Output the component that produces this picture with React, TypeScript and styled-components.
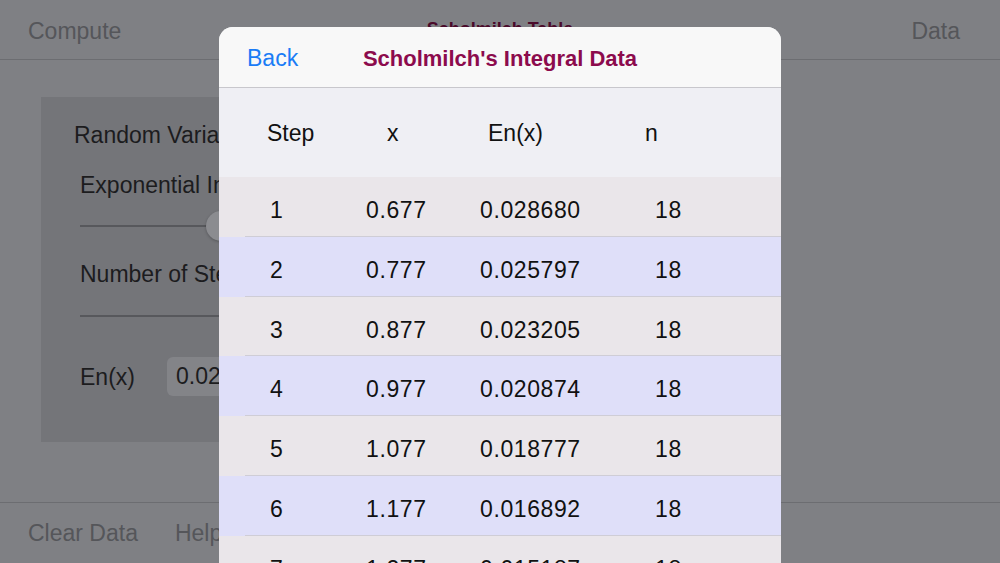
import React from 'react';
import styled, { createGlobalStyle } from 'styled-components';

const rows = [
  { step: 1, x: '0.677', en: '0.028680', n: 18 },
  { step: 2, x: '0.777', en: '0.025797', n: 18 },
  { step: 3, x: '0.877', en: '0.023205', n: 18 },
  { step: 4, x: '0.977', en: '0.020874', n: 18 },
  { step: 5, x: '1.077', en: '0.018777', n: 18 },
  { step: 6, x: '1.177', en: '0.016892', n: 18 },
  { step: 7, x: '1.277', en: '0.015187', n: 18 },
  { step: 8, x: '1.377', en: '0.013659', n: 18 },
];

const GlobalStyle = createGlobalStyle`
  html, body {
    margin: 0;
    padding: 0;
    overflow: hidden;
  }
  body {
    font-family: "Liberation Sans", Arial, sans-serif;
  }
`;

export default function App() {
  return (
    <>
      <GlobalStyle />
      <Screen>
        <NavBar>
          <NavItem>Compute</NavItem>
          <NavTitle>Scholmilch Table</NavTitle>
          <NavItem>Data</NavItem>
        </NavBar>

        <Content>
          <Panel>
            <PanelHeading>Random Variable x</PanelHeading>
            <Field>
              <FieldLabel $gap={22}>Exponential Integral Parameter</FieldLabel>
              <Slider $gap={12}>
                <Track />
                <Thumb />
              </Slider>
              <FieldLabel $gap={19}>Number of Steps</FieldLabel>
              <Slider $gap={13}>
                <Track />
              </Slider>
              <ResultRow>
                <FieldLabel $gap={0}>En(x)</FieldLabel>
                <ResultBox>0.028680</ResultBox>
              </ResultRow>
            </Field>
          </Panel>
        </Content>

        <Toolbar>
          <NavItem>Clear Data</NavItem>
          <NavItem>Help</NavItem>
        </Toolbar>

        <Modal>
          <ModalHeader>
            <BackButton>Back</BackButton>
            <ModalTitle>Scholmilch's Integral Data</ModalTitle>
          </ModalHeader>
          <ColumnHeader>
            <Cell $left={48}>Step</Cell>
            <Cell $left={168}>x</Cell>
            <Cell $left={269}>En(x)</Cell>
            <Cell $left={426}>n</Cell>
          </ColumnHeader>
          {rows.map((r) => (
            <DataRow key={r.step} $even={r.step % 2 === 0}>
              <Cell $left={51}>{r.step}</Cell>
              <Cell $left={147}>{r.x}</Cell>
              <Cell $left={261}>{r.en}</Cell>
              <Cell $left={436}>{r.n}</Cell>
            </DataRow>
          ))}
        </Modal>
      </Screen>
    </>
  );
}

const Screen = styled.div`
  position: relative;
  width: 100vw;
  height: 100vh;
  display: flex;
  flex-direction: column;
  background: #7f8084;
  overflow: hidden;
`;

const NavBar = styled.header`
  height: 60px;
  flex-shrink: 0;
  display: flex;
  align-items: center;
  justify-content: space-between;
  padding: 4px 40px 0 28px;
  border-bottom: 1px solid #6c6d71;
  box-sizing: border-box;
`;

const NavItem = styled.span`
  font-size: 23px;
  color: #55565a;
`;

const NavTitle = styled.span`
  position: absolute;
  left: 0;
  right: 0;
  top: 19px;
  text-align: center;
  font-size: 18px;
  font-weight: bold;
  color: #4a0a2a;
  pointer-events: none;
`;

const Content = styled.main`
  flex: 1;
  padding: 37px 0 0 41px;
`;

const Panel = styled.section`
  width: 440px;
  height: 345px;
  box-sizing: border-box;
  padding: 24px 0 0 33px;
  background: #747579;
`;

const PanelHeading = styled.div`
  font-size: 23px;
  line-height: 28px;
  color: #1c1c1e;
  white-space: nowrap;
`;

const Field = styled.div`
  display: flex;
  flex-direction: column;
  padding-left: 6px;
`;

const FieldLabel = styled.div<{ $gap: number }>`
  margin-top: ${({ $gap }) => $gap}px;
  font-size: 23px;
  line-height: 28px;
  color: #1c1c1e;
  white-space: nowrap;
`;

const Slider = styled.div<{ $gap: number }>`
  position: relative;
  margin-top: ${({ $gap }) => $gap}px;
  height: 30px;
  display: flex;
  align-items: center;
`;

const Track = styled.div`
  width: 100%;
  height: 2px;
  background: #57585c;
`;

const Thumb = styled.div`
  position: absolute;
  left: 126px;
  top: 0;
  width: 30px;
  height: 30px;
  border-radius: 50%;
  background: #8b8c90;
  box-shadow: 0 1px 3px rgba(0, 0, 0, 0.25);
`;

const ResultRow = styled.div`
  margin-top: 26px;
  display: flex;
  align-items: center;
  gap: 32px;
`;

const ResultBox = styled.div`
  width: 200px;
  height: 39px;
  box-sizing: border-box;
  padding-left: 9px;
  display: flex;
  align-items: center;
  border-radius: 6px;
  background: #838488;
  font-size: 23px;
  color: #1c1c1e;
`;

const Toolbar = styled.footer`
  height: 61px;
  flex-shrink: 0;
  display: flex;
  align-items: center;
  gap: 37px;
  padding: 0 28px;
  border-top: 1px solid #6c6d71;
  box-sizing: border-box;
`;

const Modal = styled.div`
  position: absolute;
  left: 219px;
  top: 27px;
  width: 562px;
  height: 620px;
  border-radius: 14px 14px 0 0;
  overflow: hidden;
  background: #efeff4;
`;

const ModalHeader = styled.div`
  position: relative;
  height: 61px;
  box-sizing: border-box;
  padding-top: 3px;
  display: flex;
  align-items: center;
  justify-content: center;
  background: #f8f8f8;
  border-bottom: 1px solid #c8c7cc;
`;

const BackButton = styled.span`
  position: absolute;
  left: 28px;
  top: 18px;
  font-size: 23px;
  color: #1a7cf6;
`;

const ModalTitle = styled.span`
  font-size: 22px;
  font-weight: bold;
  color: #8c0b4d;
`;

const ColumnHeader = styled.div`
  position: relative;
  height: 89px;
  background: #efeff4;
  font-size: 23px;
  color: #111;
  & > span {
    top: 31px;
  }
`;

const DataRow = styled.div<{ $even: boolean }>`
  position: relative;
  height: 59.8px;
  background: ${({ $even }) => ($even ? '#dfdff9' : '#eae6ea')};
  font-size: 23px;
  letter-spacing: 0.6px;
  color: #111;
  & > span {
    top: 19px;
  }
  &::after {
    content: '';
    position: absolute;
    left: 26px;
    right: 0;
    bottom: 0;
    height: 1px;
    background: #cfcdd6;
  }
`;

const Cell = styled.span<{ $left: number }>`
  position: absolute;
  left: ${({ $left }) => $left}px;
  line-height: 28px;
`;
